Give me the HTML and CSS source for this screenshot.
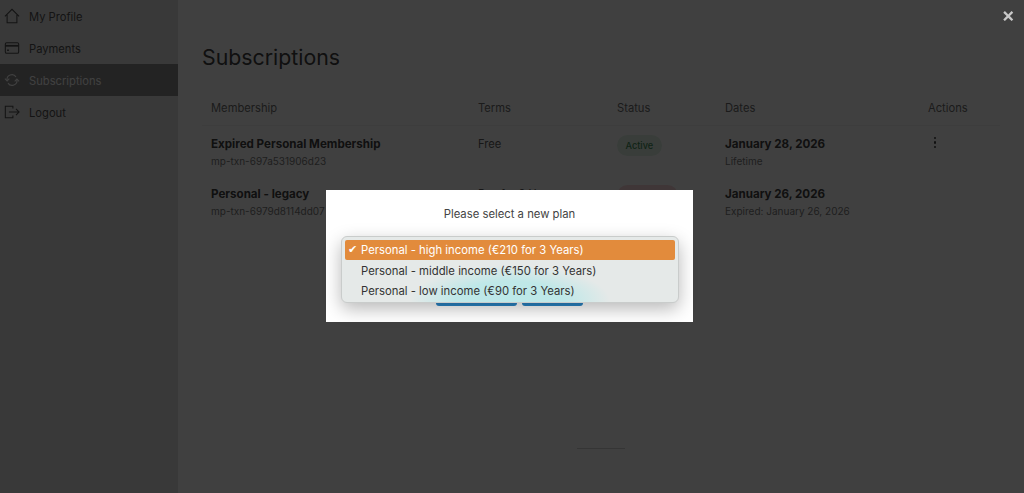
FILE: index.html
```html
<!DOCTYPE html>
<html lang="en">
<head>
<meta charset="utf-8">
<title>Subscriptions</title>
<link rel="stylesheet" href="styles.css">
</head>
<body>
<div class="app">
  <aside class="sidebar">
    <a class="nav-item">
      <svg class="nav-icon" viewBox="0 0 18 18"><path d="M1 9.500 9 1.500l8 8M3.500 7.500v9h11v-9"/></svg>
      <span>My Profile</span>
    </a>
    <a class="nav-item">
      <svg class="nav-icon" viewBox="0 0 18 18"><rect x="1.500" y="3" width="15" height="12" rx="1.500"/><path d="M1.500 6.500h15" stroke-width="2"/><path d="M3.500 11.500h2" stroke-width="1.600"/></svg>
      <span>Payments</span>
    </a>
    <a class="nav-item is-active">
      <svg class="nav-icon" viewBox="0 0 18 18"><path d="M3.500 9.500A5.500 5.500 0 0 1 13.500 5.500M14.500 8.500A5.500 5.500 0 0 1 4.500 12.500"/><path d="M1 7.500l2.500 2.500 2.500-2.500M12 10.500l2.500-2.500 2.500 2.500"/></svg>
      <span>Subscriptions</span>
    </a>
    <a class="nav-item">
      <svg class="nav-icon" viewBox="0 0 18 18"><path d="M10 5V2.500H1.500v13H10V13M5.500 9h11.500M13.500 5.500 17 9l-3.500 3.500"/></svg>
      <span>Logout</span>
    </a>
  </aside>
  <main class="content">
    <h1 class="page-title">Subscriptions</h1>
    <table class="subs">
      <thead>
        <tr>
          <th class="col-membership">Membership</th>
          <th class="col-terms">Terms</th>
          <th class="col-status">Status</th>
          <th class="col-dates">Dates</th>
          <th class="col-actions">Actions</th>
        </tr>
      </thead>
      <tbody>
        <tr>
          <td><div class="strong">Expired Personal Membership</div><div class="sub">mp-txn-697a531906d23</div></td>
          <td class="plain">Free</td>
          <td><span class="badge badge-green">Active</span></td>
          <td><div class="strong">January 28, 2026</div><div class="sub">Lifetime</div></td>
          <td><span class="kebab"><i></i><i></i><i></i></span></td>
        </tr>
        <tr>
          <td><div class="strong">Personal - legacy</div><div class="sub">mp-txn-6979d8114dd07</div></td>
          <td class="plain">Pay for 3 Years</td>
          <td><span class="badge badge-red">Cancelled</span></td>
          <td><div class="strong">January 26, 2026</div><div class="sub">Expired: January 26, 2026</div></td>
          <td></td>
        </tr>
      </tbody>
    </table>
    <div class="foot-rule"></div>
  </main>
</div>
<div class="overlay">
  <span class="close">×</span>
  <section class="modal">
    <p class="modal-title">Please select a new plan</p>
    <div class="modal-actions">
      <button class="btn btn-wide" aria-label="Change plan"></button>
      <button class="btn btn-narrow" aria-label="Cancel"></button>
    </div>
    <ul class="plan-menu">
      <li class="plan is-selected"><span class="check">✔</span>Personal - high income (€210 for 3 Years)</li>
      <li class="plan">Personal - middle income (€150 for 3 Years)</li>
      <li class="plan">Personal - low income (€90 for 3 Years)</li>
    </ul>
  </section>
</div>
</body>
</html>
```
FILE: styles.css
```css
* { box-sizing: border-box; }
html, body { margin: 0; height: 100%; overflow: hidden; }
body { font-family: Inter, "Liberation Sans", sans-serif; font-size: 11.200px; color: #333; background: #fff; }

.app { display: flex; height: 493px; }

.sidebar { width: 178px; flex: none; background: #dedede; }
.nav-item { display: flex; align-items: center; gap: 9px; height: 32px; padding-left: 4px; color: #333; }
.nav-item span { padding-top: 1px; }
.nav-icon { width: 16px; height: 16px; fill: none; stroke: #333; stroke-width: 1.200; }
.nav-item.is-active { background: #777; color: #fff; }
.nav-item.is-active .nav-icon { stroke: #fff; }

.content { flex: 1; display: flex; flex-direction: column; padding: 0 24px; }
.page-title { margin: 42px 0 0; font-size: 21.300px; line-height: 30px; font-weight: 400; color: #222; }

.subs { width: 798px; margin-top: 20px; border-collapse: collapse; table-layout: fixed; }
.subs th { height: 33px; padding: 0 0 1px 9px; text-align: left; font-weight: 400; color: #555; border-bottom: 1px solid #eee; }
.subs td { height: 51px; padding: 9px 0 0 9px; vertical-align: top; }
.col-membership { width: 267px; }
.col-terms { width: 139px; }
.col-status { width: 108px; }
.col-dates { width: 203px; }
.strong { font-size: 11.600px; font-weight: 700; line-height: 19px; color: #222; }
.sub { font-size: 10px; line-height: 15px; color: #666; }
.plain { line-height: 18px; color: #444; }

.badge { display: inline-block; height: 21px; line-height: 21px; padding: 0 8.500px; border-radius: 11px; font-size: 9.200px; font-weight: 500; }
.badge-green { background: #dcf2e2; color: #1f7a3e; }
.badge-red { background: #f8d0d4; color: #a33; }

.kebab { display: inline-flex; flex-direction: column; gap: 2px; margin: 0 0 0 5.500px; vertical-align: top; padding-top: 2px; }
.kebab i { width: 2.500px; height: 2.500px; border-radius: 50%; background: #222; }

.foot-rule { width: 48px; height: 1px; margin: auto auto 44px; background: #ccc; }

.overlay { position: fixed; inset: 0; background: rgba(11, 11, 11, .785); display: flex; align-items: flex-start; justify-content: center; }
.close { position: absolute; top: 2px; right: 9px; font-size: 20px; line-height: 26px; font-weight: 600; color: #c8c8c8; }

.modal { position: relative; width: 367px; height: 132px; margin: 190px 0 0 -5px; padding: 16px 0; background: #fff; display: flex; flex-direction: column; justify-content: space-between; }
.modal-title { margin: 0; font-size: 11.300px; line-height: 16px; text-align: center; color: #444; }
.modal-actions { display: flex; justify-content: flex-start; gap: 5px; padding-left: 110px; }
.btn { height: 28px; padding: 0; border: 0; border-radius: 3px; background: #2a85c5; }
.btn-wide { width: 81px; }
.btn-narrow { width: 61px; }

.plan-menu { position: absolute; left: 15px; top: 46px; width: 338px; height: 67px; margin: 0; padding: 4px; list-style: none; border: 1px solid #c9cccb; border-radius: 6px; background: radial-gradient(ellipse 100px 36px at 168px 64px, #bce8e8 0%, #bfe8e8 55%, rgba(229, 233, 232, 0) 100%), #e5e9e8; box-shadow: 0 6px 18px rgba(0, 0, 0, .28); }
.plan { position: relative; height: 20px; line-height: 20px; padding-left: 15px; font-size: 11.320px; color: #333; white-space: nowrap; }
.plan.is-selected { margin: -1px -1px 1px; padding-left: 16px; background: #e28b3c; color: #fff; border-radius: 2px; }
.check { position: absolute; left: 3px; font-family: "DejaVu Sans", sans-serif; font-size: 11px; }
```
